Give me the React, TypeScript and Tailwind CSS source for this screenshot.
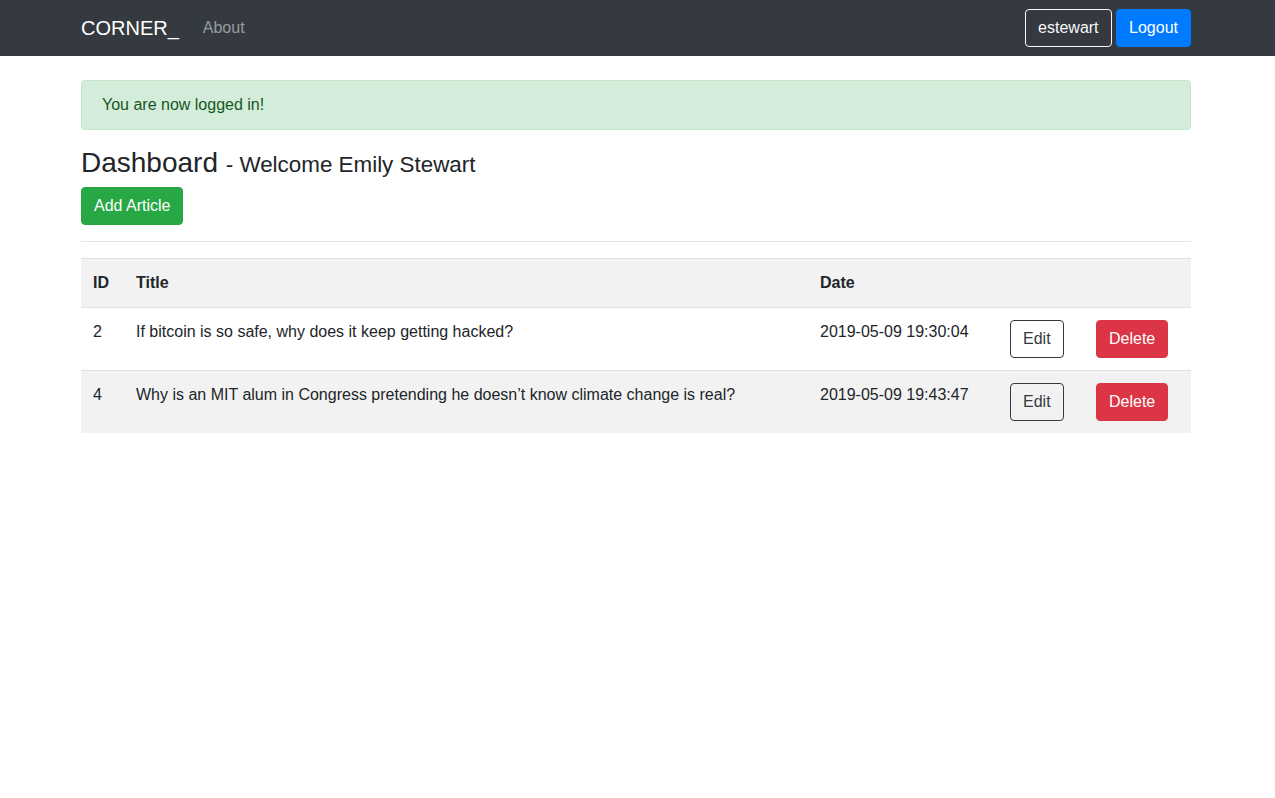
const articles = [
  { id: 2, title: "If bitcoin is so safe, why does it keep getting hacked?", date: "2019-05-09 19:30:04" },
  { id: 4, title: "Why is an MIT alum in Congress pretending he doesn\u2019t know climate change is real?", date: "2019-05-09 19:43:47" },
];

const btn = "inline-block rounded-[4px] border px-3 py-[6px] text-base leading-6";

export default function App() {
  return (
    <div className="min-h-screen bg-white font-['Liberation_Sans',Arial,sans-serif] text-base leading-6 text-[#212529]">
      <nav className="bg-[#343a40] py-2">
        <div className="flex h-10 items-center pl-[81px] pr-[84px]">
          <span className="mr-4 text-xl leading-[30px] text-white">CORNER_</span>
          <span className="px-2 text-[rgba(255,255,255,0.5)]">About</span>
          <div className="ml-auto flex gap-1">
            <button className={`${btn} px-[12.5px] border-[#f8f9fa] text-[#f8f9fa]`}>estewart</button>
            <button className={`${btn} border-[#007bff] bg-[#007bff] text-white`}>Logout</button>
          </div>
        </div>
      </nav>

      <main className="pt-6 pl-[81px] pr-[84px]">
        <div className="mb-4 rounded-[4px] border border-[#c3e6cb] bg-[#d4edda] px-5 py-3 text-[#155724]">
          You are now logged in!
        </div>

        <h3 className="mb-2 h-[33px] text-[28px] leading-[33px] font-normal">
          Dashboard <small className="text-[22.4px] leading-none">- Welcome Emily Stewart</small>
        </h3>
        <button className={`${btn} border-[#28a745] bg-[#28a745] text-white`}>Add Article</button>

        <hr className="my-4 border-t border-[rgba(0,0,0,0.1)]" />

        <table className="w-full border-collapse text-left">
          <tbody>
            <tr className="bg-[#f2f2f2]">
              <th className="w-[43px] border-t border-[#dee2e6] p-3 font-bold">ID</th>
              <th className="w-[684px] border-t border-[#dee2e6] p-3 font-bold">Title</th>
              <th className="w-[190px] border-t border-[#dee2e6] p-3 font-bold">Date</th>
              <th className="w-[86px] border-t border-[#dee2e6] p-3"></th>
              <th className="border-t border-[#dee2e6] p-3"></th>
            </tr>
            {articles.map((a, i) => (
              <tr key={a.id} className={i % 2 === 1 ? "bg-[#f2f2f2]" : ""}>
                <td className="border-t border-[#dee2e6] p-3 align-top">{a.id}</td>
                <td className="border-t border-[#dee2e6] p-3 align-top">{a.title}</td>
                <td className="border-t border-[#dee2e6] p-3 align-top">{a.date}</td>
                <td className="border-t border-[#dee2e6] p-3 align-top">
                  <button className={`${btn} border-[#343a40] text-[#343a40]`}>Edit</button>
                </td>
                <td className="border-t border-[#dee2e6] p-3 align-top">
                  <button className={`${btn} border-[#dc3545] bg-[#dc3545] text-white`}>Delete</button>
                </td>
              </tr>
            ))}
          </tbody>
        </table>
      </main>
    </div>
  );
}
